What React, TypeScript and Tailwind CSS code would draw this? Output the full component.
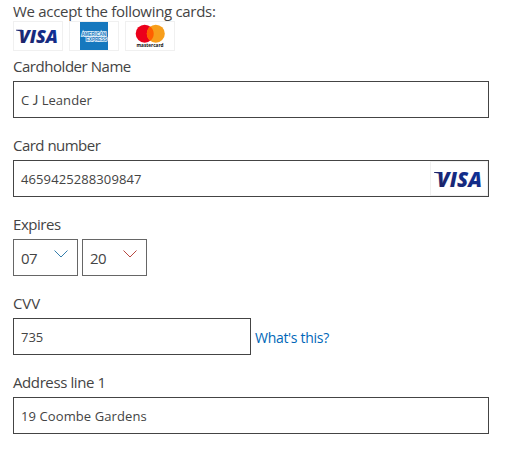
import type { ReactNode } from "react";

function Visa({ className }: { className: string }) {
  return (
    <svg viewBox="0 0 48 18" className={`overflow-visible ${className}`} aria-label="Visa">
      <defs>
        <linearGradient id="visaBlue" x1="0" x2="1" y1="1" y2="0">
          <stop offset="0" stopColor="#20215f" />
          <stop offset="1" stopColor="#0a34a5" />
        </linearGradient>
      </defs>
      <path d="M0 1.900h7l1.500 3.200Q5 3 0 2.700z" fill="#1c2268" />
      <text x="3" y="16.500" textLength="45" lengthAdjust="spacingAndGlyphs" fill="url(#visaBlue)" className="font-['Open_Sans',sans-serif] text-[20.500px] font-extrabold italic">VISA</text>
    </svg>
  );
}

function Amex() {
  return (
    <svg viewBox="0 0 28 28" className="size-7 overflow-visible" aria-label="American Express">
      <rect width="28" height="28" fill="#1678be" />
      <g className="font-['Liberation_Sans',sans-serif] text-[5.500px] font-bold" fill="#1678be" stroke="#e4f1fa" strokeWidth="1.700" paintOrder="stroke">
        <text x="1.500" y="13.700" textLength="24.500" lengthAdjust="spacingAndGlyphs">AMERICAN</text>
        <text x="6" y="19.300" textLength="21" lengthAdjust="spacingAndGlyphs">EXPRESS</text>
      </g>
    </svg>
  );
}

function Mastercard() {
  return (
    <svg viewBox="0 0 48 28" className="h-7 w-12" aria-label="Mastercard">
      <circle cx="18.700" cy="11.700" r="9" fill="#eb001b" />
      <circle cx="29.800" cy="11.700" r="9" fill="#f79e1b" />
      <path d="M24.250 4.600a9 9 0 0 1 0 14.200a9 9 0 0 1 0-14.200z" fill="#ff5f00" />
      <text x="10.500" y="25.300" textLength="27" lengthAdjust="spacingAndGlyphs" fill="#111" className="font-['Open_Sans',sans-serif] text-[5px] font-bold">mastercard</text>
    </svg>
  );
}

function CardBox({ children }: { children: ReactNode }) {
  return <div className="flex h-[30px] w-[50px] items-center justify-center border border-[#f0f0f0]">{children}</div>;
}

function Field({ label, spacing, children }: { label: string; spacing: string; children: ReactNode }) {
  return (
    <div className="mb-3">
      <div className={`h-[30px] text-[15px] leading-[31px] ${spacing}`}>{label}</div>
      <div className="flex h-[37px]">{children}</div>
    </div>
  );
}

function Box({ className, children }: { className: string; children: ReactNode }) {
  return <div className={`flex h-[37px] items-center border pl-[7px] ${className}`}>{children}</div>;
}

function Chevron({ className }: { className: string }) {
  return (
    <svg viewBox="0 0 14 8" className={`-mt-[7px] mr-[9px] ml-auto h-2 w-3.5 ${className}`} fill="none" stroke="currentColor">
      <path d="M.5.5 7 7 13.500.5" />
    </svg>
  );
}

export default function App() {
  return (
    <main className="h-[451px] w-[521px] overflow-hidden bg-white pl-[13px] font-['Open_Sans','Noto_Sans',sans-serif] text-[#444] whitespace-nowrap">
      <div className="h-[21px] text-[15px] leading-[23px] tracking-[-0.31px]">We accept the following cards:</div>
      <div className="flex gap-1.5">
        <CardBox><Visa className="-ml-0.5 h-4 w-[42px]" /></CardBox>
        <CardBox><Amex /></CardBox>
        <CardBox><Mastercard /></CardBox>
      </div>
      <Field label="Cardholder Name" spacing="tracking-[-0.46px]">
        <Box className="w-[476px] border-[#444] text-[13px] tracking-[0.05px]">
          <span className="pt-0.5">C <span className="font-['Lato',sans-serif]">J</span> Leander</span>
        </Box>
      </Field>
      <Field label="Card number" spacing="tracking-[-0.52px]">
        <Box className="w-[476px] border-[#444] text-[13px] tracking-[0.1px]">
          <span className="pt-0.5">4659425288309847</span>
          <div className="ml-auto flex h-[35px] w-[58px] items-center justify-center border border-[#f0f0f0]">
            <Visa className="-ml-0.5 h-[18px] w-12" />
          </div>
        </Box>
      </Field>
      <Field label="Expires" spacing="tracking-[-0.45px]">
        <div className="flex gap-1">
          <Box className="w-[65px] border-[#666] text-[15px] tracking-[-0.6px]"><span className="pt-0.5">07</span><Chevron className="text-[#347eac]" /></Box>
          <Box className="w-[65px] border-[#666] text-[15px] tracking-[-0.6px]"><span className="pt-0.5">20</span><Chevron className="text-[#b74740]" /></Box>
        </div>
      </Field>
      <Field label="CVV" spacing="tracking-[-0.1px]">
        <Box className="w-[238px] border-[#444] text-[13px]"><span className="pt-0.5">735</span></Box>
        <a className="ml-1 text-[14px] leading-[40px] tracking-[-0.3px] text-[#0067b8]">What's this?</a>
      </Field>
      <Field label="Address line 1" spacing="tracking-[-0.4px]">
        <Box className="w-[476px] border-[#444] text-[13px] tracking-[0.1px]"><span className="pt-0.5">19 Coombe Gardens</span></Box>
      </Field>
    </main>
  );
}
